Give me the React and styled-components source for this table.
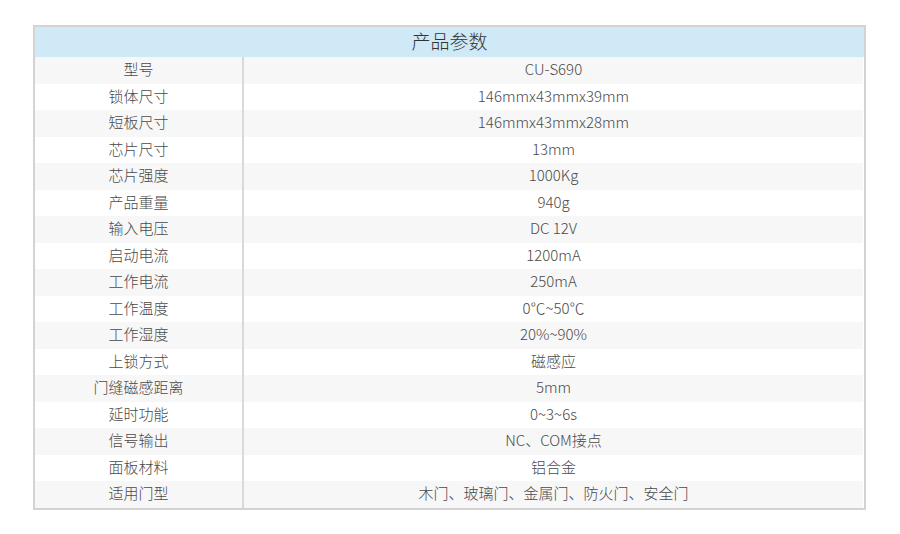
import React from "react";
import styled, { createGlobalStyle } from "styled-components";

const rows = [
	["型号", "CU-S690"],
	["锁体尺寸", "146mmx43mmx39mm"],
	["短板尺寸", "146mmx43mmx28mm"],
	["芯片尺寸", "13mm"],
	["芯片强度", "1000Kg"],
	["产品重量", "940g"],
	["输入电压", "DC 12V"],
	["启动电流", "1200mA"],
	["工作电流", "250mA"],
	["工作温度", "0℃~50℃"],
	["工作湿度", "20%~90%"],
	["上锁方式", "磁感应"],
	["门缝磁感距离", "5mm"],
	["延时功能", "0~3~6s"],
	["信号输出", "NC、COM接点"],
	["面板材料", "铝合金"],
	["适用门型", "木门、玻璃门、金属门、防火门、安全门"],
];

const GlobalStyle = createGlobalStyle`
	body {
		margin: 0;
		background: #fff;
		font-family: "Noto Sans CJK SC", "Noto Sans", sans-serif;
	}
`;

const Page = styled.div`
	padding: 25px 0 0 33px;
`;

const Table = styled.div`
	width: 833px;
	box-sizing: border-box;
	border: 2px solid #d3d3d3;
	display: flex;
	flex-direction: column;
`;

const Header = styled.div`
	height: 30px;
	box-sizing: border-box;
	padding-bottom: 3px;
	background: #cfe9f7;
	color: #333;
	font-size: 19px;
	font-weight: 300;
	display: flex;
	align-items: center;
	justify-content: center;
`;

const Row = styled.div`
	height: 26.5px;
	display: grid;
	grid-template-columns: 207px 2px 1fr;
	background: ${(p) => (p.$odd ? "#f7f7f7" : "#fff")};
	margin-right: 1px;
`;

const Cell = styled.div`
	display: flex;
	align-items: center;
	justify-content: center;
	padding-bottom: 3px;
	font-size: 15px;
	font-weight: 300;
	color: #4a4a4a;
	white-space: nowrap;
`;

const Divider = styled.div`
	background: #d9d9d9;
`;

export default function App() {
	return (
		<>
			<GlobalStyle />
			<Page>
				<Table>
					<Header>产品参数</Header>
					{rows.map(([label, value], i) => (
						<Row key={label} $odd={i % 2 === 0}>
							<Cell>{label}</Cell>
							<Divider />
							<Cell>{value}</Cell>
						</Row>
					))}
				</Table>
			</Page>
		</>
	);
}
